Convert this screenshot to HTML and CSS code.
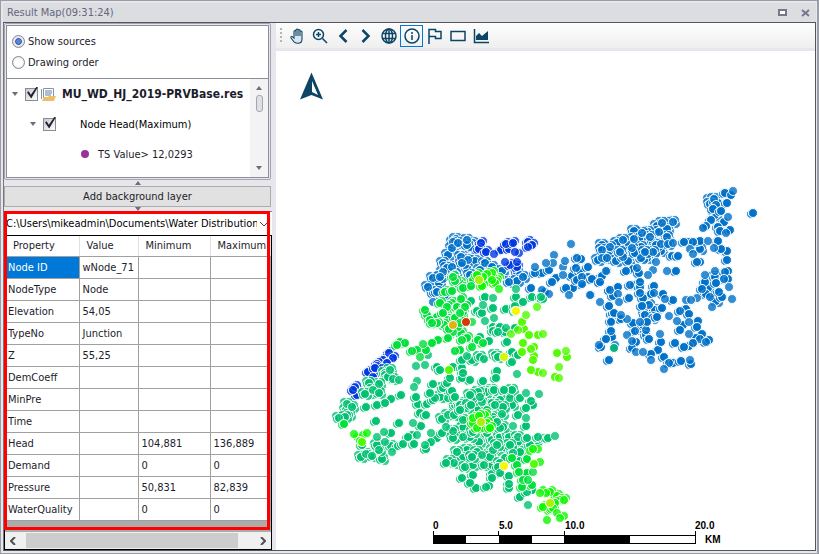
FILE: index.html
```html
<!DOCTYPE html>
<html lang="en">
<head>
    <meta charset="UTF-8">
    <meta name="viewport" content="width=device-width, initial-scale=1.0">
    <title>Result Map</title>
    <link rel="stylesheet" href="styles.css">
</head>
<body>
<div class="window">
    <header class="titlebar">
        <h1>Result Map(09:31:24)</h1>
        <button class="winbtn" aria-label="Maximize"><svg width="9" height="8"><rect x="1" y="1" width="7" height="5" fill="#fff" stroke="#77778a" stroke-width="2"/></svg></button>
        <button class="winbtn" aria-label="Close"><svg width="9" height="8"><path d="M1 1l7 6M8 1l-7 6" stroke="#77778a" stroke-width="2"/></svg></button>
    </header>
    <main class="content">
        <aside class="sidebar">
            <div class="layers">
                <div class="modes">
                    <label><input type="radio" name="mode" checked>Show sources</label>
                    <label><input type="radio" name="mode">Drawing order</label>
                </div>
                <div class="treebox">
                    <ul class="tree">
                        <li class="lvl1"><i class="caret"></i><label><input type="checkbox" checked>
                            <svg class="doc" width="16" height="14"><path d="M1.500 2v10M3.500 1.500h10v9h-10z" fill="#fff" stroke="#8494a8"/><path d="M5 4h7M5 6h7M5 8h6" stroke="#5f7fa6"/><path d="M2 14l2-4h4l1-1h7l-2 5z" fill="#eebd68"/></svg>
                            <b>MU_WD_HJ_2019-PRVBase.res</b></label></li>
                        <li class="lvl2"><i class="caret"></i><label><input type="checkbox" checked><span>Node Head(Maximum)</span></label></li>
                        <li class="lvl3"><i class="dot"></i>TS Value&gt; 12,0293</li>
                    </ul>
                    <div class="vscroll"><i class="up"></i><i class="thumb"></i><i class="down"></i></div>
                </div>
            </div>
            <div class="splitter"><i class="up"></i></div>
            <button class="addlayer">Add background layer</button>
            <div class="splitter small"><i class="down"></i></div>
            <div class="properties">
                <div class="path">
                    <select aria-label="Result file"><option>C:\Users\mikeadmin\Documents\Water Distribution\</option></select>
                    <svg width="10" height="6"><path d="M1 1l4 4 4-4" fill="none" stroke="#444"/></svg>
                </div>
                <div class="grid">
                    <table>
                        <thead>
                            <tr><th>Property</th><th>Value</th><th>Minimum</th><th>Maximum</th></tr>
                        </thead>
                        <tbody>
                            <tr><td class="selected">Node ID</td><td>wNode_71</td><td></td><td></td></tr>
                            <tr><td>NodeType</td><td>Node</td><td></td><td></td></tr>
                            <tr><td>Elevation</td><td>54,05</td><td></td><td></td></tr>
                            <tr><td>TypeNo</td><td>Junction</td><td></td><td></td></tr>
                            <tr><td>Z</td><td>55,25</td><td></td><td></td></tr>
                            <tr><td>DemCoeff</td><td></td><td></td><td></td></tr>
                            <tr><td>MinPre</td><td></td><td></td><td></td></tr>
                            <tr><td>Time</td><td></td><td></td><td></td></tr>
                            <tr><td>Head</td><td></td><td>104,881</td><td>136,889</td></tr>
                            <tr><td>Demand</td><td></td><td>0</td><td>0</td></tr>
                            <tr><td>Pressure</td><td></td><td>50,831</td><td>82,839</td></tr>
                            <tr><td>WaterQuality</td><td></td><td>0</td><td>0</td></tr>
                        </tbody>
                    </table>
                </div>
                <div class="hscroll">
                    <svg width="7" height="8"><path d="M5 0L1 4l4 4" fill="none" stroke="#505050" stroke-width="2"/></svg>
                    <i></i>
                    <svg width="7" height="8"><path d="M2 0l4 4-4 4" fill="none" stroke="#505050" stroke-width="2"/></svg>
                </div>
                <div class="highlight"></div>
            </div>
        </aside>
        <section class="mapside">
            <nav class="toolbar">
                <i class="grip"></i>
                <button aria-label="Pan"><svg viewBox="0 0 16 16"><path d="M5 10V3.500a1 1 0 0 1 2 0V8V2a1 1 0 0 1 2 0v6V2.500a1 1 0 0 1 2 0V8V4a1 1 0 0 1 2 0v7c0 3-1 4.300-4 4.300-3.500 0-4-1.300-7-5.300-.5-1.500.8-2 2-.8z" fill="#dbe5eb" stroke="#0c4565" stroke-width="1.100"/></svg></button>
                <button aria-label="Zoom in"><svg viewBox="0 0 16 16"><circle cx="6.500" cy="6.500" r="5" class="line"/><path d="M10.500 10.500L15 15M6.500 4v5M4 6.500h5" class="line"/></svg></button>
                <button aria-label="Previous"><svg viewBox="0 0 16 16"><path d="M11.500 2L5.500 8l6 6" class="thick"/></svg></button>
                <button aria-label="Next"><svg viewBox="0 0 16 16"><path d="M4.500 2l6 6-6 6" class="thick"/></svg></button>
                <button aria-label="Full extent"><svg viewBox="0 0 16 16"><circle cx="8" cy="8" r="7" class="line"/><ellipse cx="8" cy="8" rx="3.500" ry="7" class="line"/><path d="M8 1v14M1.500 5.500h13M1.500 10.500h13" class="line"/></svg></button>
                <button aria-label="Info" class="active"><svg viewBox="0 0 16 16"><circle cx="8" cy="8" r="7" class="line"/><path d="M8 7v5M8 4v2" class="line"/></svg></button>
                <button aria-label="Flag"><svg viewBox="0 0 16 16"><path d="M2 16V1.500h6.500v2H14v7H8.500v-2H2" class="line"/></svg></button>
                <button aria-label="Rectangle"><svg viewBox="0 0 16 16"><rect x="1" y="3.500" width="14" height="9" class="line"/></svg></button>
                <button aria-label="Chart"><svg viewBox="0 0 16 16"><path d="M1.500 1v13.500H16" class="line"/><path d="M3 12V8l3-3 3 3 6-5v9z" fill="#0c4565"/></svg></button>
            </nav>
            <div class="map">
                <svg class="network" viewBox="276 51 539 499" preserveAspectRatio="xMinYMin meet">
                    <g id="nodes"></g>
                    <path d="M311.500 72.500l11.500 27-11.500-4.500-11.500 4.500z" fill="#0c4565"/>
                    <path d="M312 81l6 14-6-3z" fill="#fff"/>
                    <g class="scalebar">
                        <text x="433" y="529">0</text>
                        <text x="499" y="529">5.0</text>
                        <text x="565" y="529">10.0</text>
                        <text x="695" y="529">20.0</text>
                        <text x="705" y="543">KM</text>
                        <path d="M433.500 531v12M498.500 531v12M564.500 531v12M695.500 531v12" stroke="#000"/>
                        <rect x="433.500" y="535.500" width="262" height="8" fill="#fff" stroke="#000"/>
                        <path d="M433 535h33v9h-33zM499 535h33v9h-33zM564 535h66v9h-66z"/>
                    </g>
                </svg>
            </div>
        </section>
    </main>
</div>
<script src="map.js"></script>
</body>
</html>
```
FILE: styles.css
```css
html, body {
    margin: 0;
    padding: 0;
    height: 100%;
    font-family: "DejaVu Sans Condensed", "DejaVu Sans", sans-serif;
    font-size: 11px;
    color: #1c1c2c;
}
* {
    box-sizing: border-box;
}
button, select, input {
    font: inherit;
    color: inherit;
    margin: 0;
}
svg {
    display: block;
}
.window {
    min-height: 100vh;
    display: flex;
    flex-direction: column;
    padding: 2px 1px 2px 2px;
    background: #e6e6ec;
    border: 1px solid #9a9ca6;
    border-width: 1px 2px 2px 1px;
}
.titlebar {
    height: 20px;
    display: flex;
    align-items: center;
    padding: 0 6px 0 4px;
    background: #dcdde1;
    border-bottom: 1px solid #55565c;
}
.titlebar h1 {
    flex: 1;
    margin: 0;
    font-size: 11px;
    font-weight: normal;
    color: #66667a;
}
.winbtn {
    border: 0;
    background: none;
    padding: 0;
    margin-left: 14px;
}
.content {
    flex: 1;
    display: flex;
    border-right: 1px solid #55565c;
    border-bottom: 1px solid #55565c;
    border-left: 1px solid #77787e;
}
.sidebar {
    width: 268px;
    flex: none;
    display: flex;
    flex-direction: column;
}
.layers {
    margin: 0 1px 0 0;
    padding: 1px;
    border: 1px solid #a3a5b0;
    border-radius: 2px;
}
.modes {
    height: 54px;
    display: flex;
    flex-direction: column;
    justify-content: center;
    gap: 8px;
    padding-left: 5px;
    background: #fff;
    border: 1px solid #8b8d99;
}
.modes label {
    display: flex;
    align-items: center;
    gap: 3px;
}
.modes input {
    appearance: none;
    width: 13px;
    height: 13px;
    border-radius: 50%;
    border: 1px solid #85878f;
    background: radial-gradient(#fff 45%, #d0d0d8);
}
.modes input:checked {
    background: radial-gradient(#5b86d8 25%, #3557a8 38%, #e8e8f0 48%);
}
.treebox {
    height: 99px;
    display: flex;
    background: #fff;
    border: 1px solid #8b8d99;
    border-top: 0;
}
.tree {
    flex: 1;
    margin: 0;
    padding: 0;
    list-style: none;
}
.tree li {
    height: 30px;
    display: flex;
    align-items: center;
}
.tree label {
    display: flex;
    align-items: center;
}
.tree .lvl1 {
    padding-left: 5px;
}
.tree .lvl2 {
    padding-left: 23px;
    color: #000;
}
.tree .lvl3 {
    padding-left: 74px;
}
.tree b {
    margin-left: 6px;
    font-size: 12px;
}
.tree span {
    margin-left: 22px;
}
.tree input {
    appearance: none;
    position: relative;
    width: 13px;
    height: 13px;
    margin: 0 2px 0 7px;
    border: 1px solid #8a8c94;
    background: linear-gradient(135deg, #c8cad0, #fff);
}
.tree input:checked::after {
    content: "";
    position: absolute;
    left: 1px;
    top: -2px;
    width: 11px;
    height: 12px;
    background: #222230;
    clip-path: polygon(0 50%, 15% 40%, 35% 68%, 88% 0, 100% 4%, 38% 100%);
}
.caret, .down {
    border: 3px solid transparent;
    border-top: 4px solid #6c6d78;
    border-bottom: 0;
}
.up {
    border: 3px solid transparent;
    border-bottom: 4px solid #6c6d78;
    border-top: 0;
}
.dot {
    width: 8px;
    height: 8px;
    margin-right: 9px;
    border-radius: 50%;
    background: #993399;
}
.vscroll {
    width: 18px;
    padding: 7px 0;
    display: flex;
    flex-direction: column;
    align-items: center;
    background: #f3f3f5;
}
.vscroll .thumb {
    width: 7px;
    height: 17px;
    margin: 5px 0 auto;
    border: 1px solid #a5a6b0;
    border-radius: 3px;
    background: #dfe0e5;
}
.splitter {
    height: 6px;
    display: flex;
    align-items: center;
    justify-content: center;
}
.splitter.small {
    height: 4px;
}
.addlayer {
    height: 21px;
    margin-right: 1px;
    padding: 0;
    background: #e1e1e1;
    border: 1px solid #adadad;
}
.properties {
    position: relative;
    flex: 1;
    display: flex;
    flex-direction: column;
}
.path {
    height: 24px;
    display: flex;
    align-items: center;
    gap: 2px;
    padding: 0 3px 0 2px;
    background: #fff;
    border-top: 1px solid #888;
}
.path select {
    appearance: none;
    flex: 1;
    min-width: 0;
    height: 20px;
    padding: 0;
    border: 0;
    background: none;
    color: #000;
    text-overflow: clip;
}
.grid {
    flex: 1;
    overflow: hidden;
    background: #ababab;
    border: 1px solid #000;
    border-bottom: 0;
}
table {
    width: 100%;
    table-layout: fixed;
    border-collapse: collapse;
    background: #fff;
}
th, td {
    height: 22px;
    padding: 0 0 0 3px;
    border: 1px solid #a0a0a0;
    border-left: 0;
    border-top: 0;
    text-align: left;
    white-space: nowrap;
}
th {
    height: 20px;
    padding-left: 7px;
    font-weight: normal;
    border-right-color: #e0e0e0;
}
th:first-child {
    width: 74px;
    padding-left: 8px;
}
th:nth-child(2) {
    width: 59px;
}
th:nth-child(3) {
    width: 72px;
}
.selected {
    background: #0078d7;
    color: #fff;
}
.hscroll {
    height: 18px;
    display: flex;
    align-items: center;
    gap: 9px;
    padding: 0 5px;
    background: #f0f0f0;
    border: 1px solid #000;
    border-top: 0;
}
.hscroll i {
    flex: 1;
    height: 15px;
    margin-right: 12px;
    background: #cdcdcd;
}
/* red frame round the property table */
.highlight {
    position: absolute;
    inset: 0 2px 20px 0;
    border: 3px solid #f00;
    pointer-events: none;
}
.mapside {
    flex: 1;
    min-width: 0;
    margin-left: 4px;
    display: flex;
    flex-direction: column;
}
.toolbar {
    height: 25px;
    margin-bottom: 3px;
    display: flex;
    align-items: center;
    padding-left: 4px;
    background: linear-gradient(#fdfdfd, #efefef);
}
.toolbar button {
    width: 23px;
    height: 22px;
    padding: 0;
    display: flex;
    align-items: center;
    justify-content: center;
    border: 1px solid transparent;
    background: none;
}
.toolbar .active {
    border-color: #0078d7;
}
.toolbar svg {
    width: 16px;
    height: 16px;
}
.line {
    fill: none;
    stroke: #0c4565;
    stroke-width: 1.5px;
}
.thick {
    fill: none;
    stroke: #0c4565;
    stroke-width: 2.5px;
}
.grip {
    width: 2px;
    height: 15px;
    margin-right: 3px;
    background: repeating-linear-gradient(#b4b4b4 0 2px, transparent 2px 4px);
}
.map {
    flex: 1;
    background: #fff;
}
.network {
    width: 100%;
}
#nodes circle {
    stroke: #fff;
    stroke-width: 1px;
    fill-opacity: .8;
    stroke-opacity: .9;
}
.scalebar text {
    font-family: "Liberation Sans", Arial, sans-serif;
    font-size: 10px;
    font-weight: bold;
}
```
FILE: map.js
```js
// node positions, one layer per colour class; crowd = how many near neighbours each node has
const layers = [
    { color: "#0070c8", crowd: 5, nodes: "453,242 456,239 467,240 473,243 452,248 448,255 461,257 470,248 468,260 475,261 485,263 443,263 443,272 460,269 452,267 467,268 433,278 439,283 428,287 433,293 440,277 480,270 492,267 502,271 509,282 517,272 523,277 470,275 437,292 445,295 458,243 467,245 462,263 447,268 455,274 517,281 673,222 667,223 662,223 657,226 659,232 667,229 667,237 648,232 642,233 634,231 634,239 642,238 650,237 651,242 661,244 661,251 668,244 656,245 653,252 647,258 641,258 641,247 632,248 626,246 623,240 617,243 610,247 602,245 602,250 610,252 602,258 598,260 607,258 616,261 623,257 628,261 620,252 635,253 645,252 710,200 714,199 710,204 716,205 715,215 649,305 650,312 645,315 655,310 652,318 700,249 715,277 716,301 708,288" },
    { color: "#0070c8", crowd: 2, nodes: "577,258 581,259 535,273 542,273 549,270 556,278 552,282 572,276 576,268 580,271 582,277 588,277 588,267 592,279 602,276 600,282 582,284 573,288 566,288 577,280 545,292 612,314 610,290 531,288 731,195 725,193 727,203 713,209 721,211 724,222 711,220 718,227 706,226 720,231 730,230 753,213 718,241 700,241 693,242 688,242 684,242 700,262 697,262 727,251 727,260 721,249 725,272 728,271 724,279 728,279 716,283 705,282 702,289 706,294 719,292 722,297 673,300 663,294 651,294 654,286 680,311 686,309 689,314 698,321 697,327 683,325 680,330 702,334 700,339 696,338 706,342 709,340 693,343 689,346 684,347 675,343 661,342 658,350 651,354 664,357 669,363 673,363 681,361 691,364 632,348 636,342 635,331 642,330 646,330 646,335 649,339 643,325 647,322 633,323 621,319 612,314 614,313 611,321 611,331 612,337 606,339 601,347 609,360 609,306 629,298 610,290 618,287 613,296 630,285 634,285 640,282 640,287 640,293 643,298 642,306 662,308 657,317 633,269 626,271 639,273 676,271 672,256 678,256 592,279 600,282" },
    { color: "#0070c8", crowd: 0, nodes: "571,244 554,255 546,263 553,263 565,261 563,267 535,267 563,275 607,271 569,295 590,295 600,302 609,306 542,290 549,294 433,302 733,191 728,217 703,228 726,233 708,241 673,243 693,254 690,249 714,248 715,271 705,275 729,287 732,299 712,307 710,297 697,298 691,300 686,300 665,299 654,293 669,316 677,321 689,322 689,334 660,334 690,360 664,369 651,360 643,352 636,352 632,341 627,335 640,322 627,319 621,315 599,345 615,345 591,295 619,302 618,294 648,275 653,270 656,262 667,271 606,271 611,322 637,268" },
    { color: "#0038e0", crowd: 3, nodes: "481,243 479,249 486,252 501,250 506,244 509,249 513,243 528,242 528,247 532,245 510,265 517,267 389,353 389,359 393,358 383,360 387,363 377,364 382,368 372,373 373,377 368,372 375,368 356,390 355,387 357,395 353,390" },
    { color: "#0038e0", crowd: 0, nodes: "494,254 519,253 505,262 517,262 515,252" },
    { color: "#00c070", crowd: 5, nodes: "390,370 385,373 393,379 388,377 379,384 369,383 373,390 370,393 379,393 365,394 347,404 346,410 352,407 349,415 339,418 345,417 366,454 361,457 372,456 382,459 379,450 377,445 391,446 472,360 480,357 495,355 498,357 479,442 487,433 492,440 493,450 467,450 457,452 463,458 454,463 450,461 465,467 473,465 484,465 492,465 482,455 477,452 472,457 500,437 500,428 509,437 518,437 506,448 505,458 518,442 513,453 520,452 510,398 512,405 482,402 490,403 487,410 477,410 480,397 473,400 466,403 500,400 492,390 486,392 502,414 493,417 497,422 503,427 463,420 463,428 463,437 470,437 453,431 453,438 448,415 442,419 454,415 455,405 448,398 440,397 443,388 510,445 497,445 490,457 500,463 473,432 495,405 503,407 512,390 478,392 470,395 460,405 467,408" },
    { color: "#00c070", crowd: 2, nodes: "401,395 391,399 385,403 377,405 366,407 376,421 399,423 418,404 416,397 427,404 435,398 420,413 421,426 426,415 391,433 398,446 403,444 414,444 431,442 437,438 442,433 412,435 408,437 426,449 362,445 433,400 430,393 433,384 447,383 452,391 450,378 437,367 440,370 453,367 462,360 462,368 463,373 497,371 496,378 512,352 512,362 518,355 470,380 462,378 483,381 494,390 504,390 520,398 531,401 533,405 526,408 526,426 518,415 539,442 538,437 530,445 527,438 543,438 548,438 509,476 509,484 509,488 500,473 492,474 492,478 498,467 473,475 462,478 470,483 476,488 486,487 489,486 471,405 460,410 455,397 446,463 493,308 477,311 482,313 506,309 515,306 516,297 523,302 532,297 541,297 543,299 485,297 493,327 500,327 515,328 507,342 489,341 480,337 493,331 498,332 505,332 515,311 520,497 527,492 532,490 471,301 520,461" },
    { color: "#00c070", crowd: 0, nodes: "428,355 416,366 425,365 417,381 414,387 399,380 413,423 417,435 377,437 385,442 384,432 392,452 431,433 446,427 484,359 517,374 485,321 494,318 493,298 516,289 506,328 526,393 539,394 555,436 513,426 528,505 483,305 526,418 425,445 455,351 467,356" },
    { color: "#00e03a", crowd: 3, nodes: "453,277 445,292 452,291 460,283 463,288 455,281 471,286 473,280 461,299 452,303 440,303 448,313 447,307 457,313 463,312 457,307 465,307 445,323 460,323 437,317 443,313 448,320 460,313 462,318 453,332 461,333 462,340 467,338 448,338 444,325 437,324 455,318 449,329 458,327" },
    { color: "#00e03a", crowd: 2, nodes: "425,310 427,315 430,320 437,323 432,323 438,340 432,343 426,350 412,351 417,350 405,343 400,342 397,345 460,350 472,347 475,343 483,343 478,340 512,458 517,465 519,472 527,473 523,480 525,485 532,485 522,487 344,424 527,459" },
    { color: "#00e03a", crowd: 0, nodes: "423,344 420,357 455,351 472,322 533,472 528,480" },
    { color: "#0cf800", crowd: 3, nodes: "492,273 498,279 487,274 487,282 492,280 482,286 483,277 495,283 477,275 485,415 473,418 487,423 477,428 483,428 490,428 473,423 479,416 553,495 550,492 557,496 564,500 560,500 543,507 550,510 553,508 555,503" },
    { color: "#0cf800", crowd: 0, nodes: "499,289 543,490 540,493 546,493 557,513 564,516 560,518 547,520 354,434 357,437 367,433 363,435 360,441 530,451 533,449 538,449 540,462" },
    { color: "#50fa00", crowd: 1, nodes: "522,322 524,329 529,335 538,335 523,343 522,352 531,349 534,347 533,360 534,356 531,370 538,372 555,377 557,353 567,357 449,370 362,442 534,464" },
    { color: "#50fa00", crowd: 0, nodes: "537,307 526,315 518,330 511,334 543,334 543,373 559,367 559,378 566,351" },
    { color: "#00b080", crowd: 1, nodes: "614,348" },
    { color: "#a8f000", crowd: 1, nodes: "479,280 481,422 550,503" },
    { color: "#d4f800", crowd: 1, nodes: "504,357" },
    { color: "#fff800", crowd: 1, nodes: "516,311 504,466" },
    { color: "#e0b010", crowd: 1, nodes: "453,325" },
    { color: "#d83000", crowd: 1, nodes: "466,322" }
];
const near = [[0, 0], [-2, 1], [2, -2], [-3, -2], [3, 2]];

function circle(x, y, color) {
    const c = document.createElementNS("http://www.w3.org/2000/svg", "circle");
    c.setAttribute("cx", x);
    c.setAttribute("cy", y);
    c.setAttribute("r", 4.5);
    c.setAttribute("fill", color);
    document.getElementById("nodes").appendChild(c);
}

for (const layer of layers) {
    // neighbours go under the nodes of their own layer
    const nodes = layer.nodes.split(" ").map(node => node.split(",").map(Number));
    nodes.forEach(([x, y], n) => {
        for (let i = layer.crowd - 1; i >= 0; i--) {
            circle(x + near[i][0], y + near[i][1], layer.color);
        }
        if (n % 2) circle(x, y, layer.color);
    });
    nodes.forEach(([x, y], n) => {
        if (n % 2 == 0) circle(x, y, layer.color);
    });
}
```
